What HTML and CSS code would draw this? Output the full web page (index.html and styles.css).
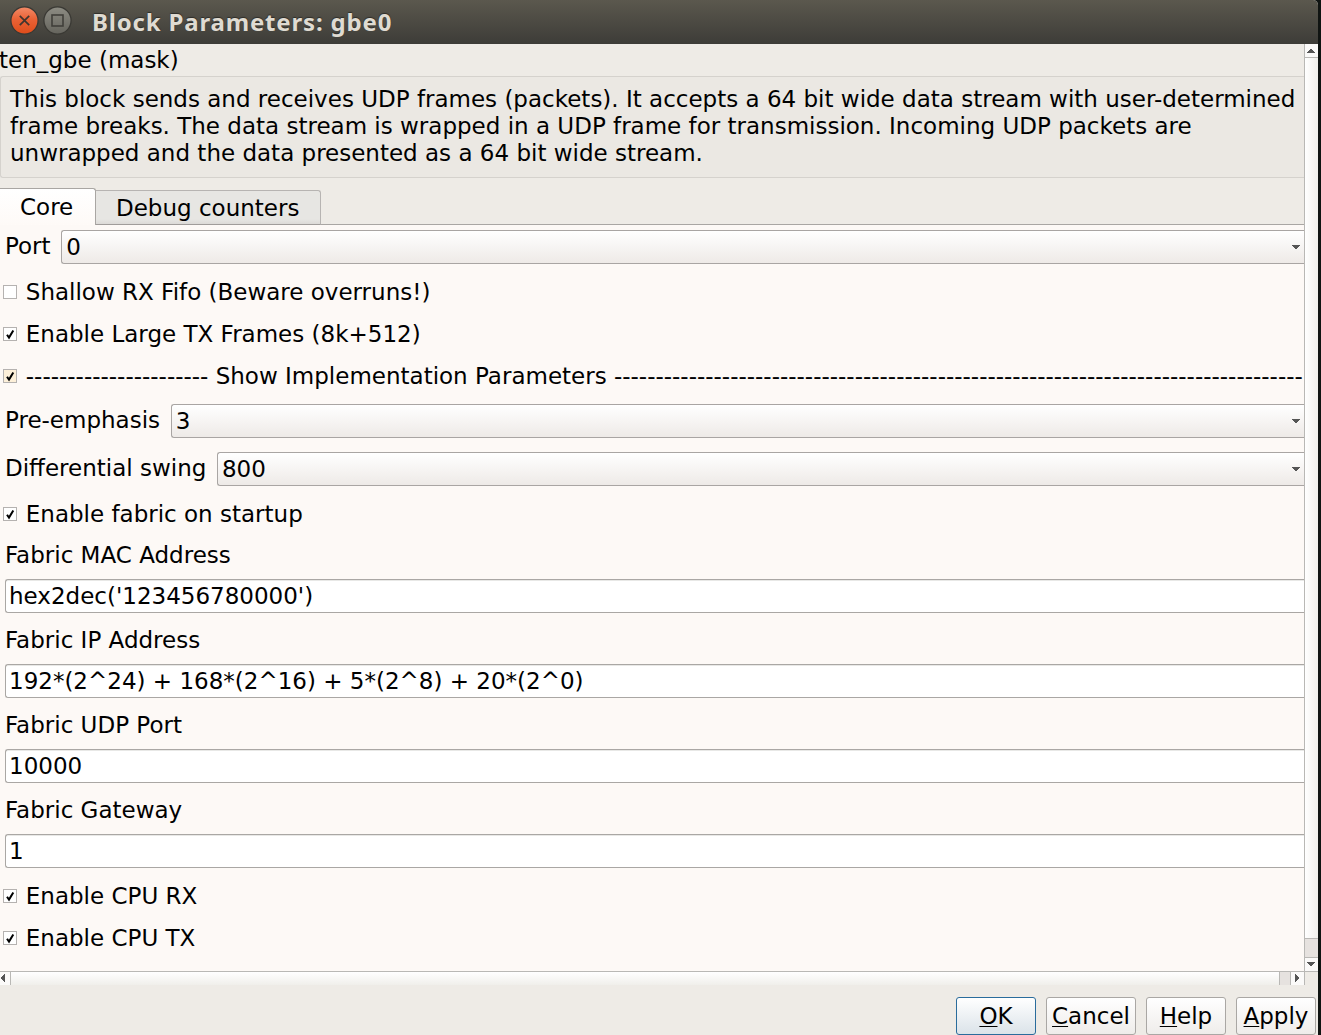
FILE: index.html
```html
<!DOCTYPE html>
<html lang="en">
<head>
<meta charset="utf-8">
<title>Block Parameters: gbe0</title>
<link rel="stylesheet" href="styles.css">
</head>
<body>
<div class="window">
  <header class="titlebar">
    <svg class="controls" width="66" height="44" viewBox="0 0 66 44">
      <defs>
        <linearGradient id="close" x1="0" y1="0" x2="0" y2="1"><stop offset="0" stop-color="#f38b68"/><stop offset=".45" stop-color="#ea6236"/><stop offset="1" stop-color="#df4c1a"/></linearGradient>
        <linearGradient id="max" x1="0" y1="0" x2="0" y2="1"><stop offset="0" stop-color="#8d8c83"/><stop offset="1" stop-color="#65645d"/></linearGradient>
      </defs>
      <circle cx="16.5" cy="20.5" r="13.6" fill="url(#close)" stroke="#3a3934" stroke-width="1.3"/>
      <path d="M11.8 15.8l9.4 9.4M21.2 15.8l-9.4 9.4" stroke="#40352e" stroke-width="1.7"/>
      <circle cx="49.5" cy="20.5" r="13.6" fill="url(#max)" stroke="#3a3934" stroke-width="1.3"/>
      <rect x="44" y="15" width="11" height="11" fill="none" stroke="#403f3a" stroke-width="1.6"/>
    </svg>
    <h1 class="title">Block Parameters: gbe0</h1>
  </header>

  <div class="scroll-area">
    <main class="content">
      <div class="mask-name">ten_gbe (mask)</div>
      <div class="description">This block sends and receives UDP frames (packets). It accepts a 64 bit wide data stream with user-determined<br>frame breaks. The data stream is wrapped in a UDP frame for transmission. Incoming UDP packets are<br>unwrapped and the data presented as a 64 bit wide stream.</div>
      <nav class="tabs">
        <div class="tab tab-active">Core</div>
        <div class="tab tab-idle">Debug counters</div>
        <div class="tab-rest"></div>
      </nav>
      <section class="panel">
        <div class="combo-row port-row"><span class="combo-label">Port</span><div class="combo"><span>0</span><svg class="arrow" width="8" height="4"><path d="M0 0h8v1H7v1H6v1H5v1H3V3H2V2H1V1H0z"/></svg></div></div>
        <div class="check-row"><span class="box"></span><span>Shallow RX Fifo (Beware overruns!)</span></div>
        <div class="check-row"><span class="box"><svg width="12" height="12"><path class="tick" d="M3 6.7L5 9.6L9.3 2.4"/></svg></span><span>Enable Large TX Frames (8k+512)</span></div>
        <div class="check-row"><span class="box box-hot"><svg width="12" height="12"><path class="tick" d="M3 6.7L5 9.6L9.3 2.4"/></svg></span><span>---------------------- Show Implementation Parameters -----------------------------------------------------------------------------------</span></div>
        <div class="combo-row"><span class="combo-label">Pre-emphasis</span><div class="combo"><span>3</span><svg class="arrow" width="8" height="4"><path d="M0 0h8v1H7v1H6v1H5v1H3V3H2V2H1V1H0z"/></svg></div></div>
        <div class="combo-row"><span class="combo-label">Differential swing</span><div class="combo"><span>800</span><svg class="arrow" width="8" height="4"><path d="M0 0h8v1H7v1H6v1H5v1H3V3H2V2H1V1H0z"/></svg></div></div>
        <div class="check-row"><span class="box"><svg width="12" height="12"><path class="tick" d="M3 6.7L5 9.6L9.3 2.4"/></svg></span><span>Enable fabric on startup</span></div>
        <div class="field"><div class="field-label">Fabric MAC Address</div><div class="input">hex2dec('123456780000')</div></div>
        <div class="field"><div class="field-label">Fabric IP Address</div><div class="input">192*(2^24) + 168*(2^16) + 5*(2^8) + 20*(2^0)</div></div>
        <div class="field"><div class="field-label">Fabric UDP Port</div><div class="input">10000</div></div>
        <div class="field"><div class="field-label">Fabric Gateway</div><div class="input">1</div></div>
        <div class="check-row"><span class="box"><svg width="12" height="12"><path class="tick" d="M3 6.7L5 9.6L9.3 2.4"/></svg></span><span>Enable CPU RX</span></div>
        <div class="check-row"><span class="box"><svg width="12" height="12"><path class="tick" d="M3 6.7L5 9.6L9.3 2.4"/></svg></span><span>Enable CPU TX</span></div>
      </section>
    </main>
    <div class="vbar">
      <div class="step step-up"><svg class="arrow" width="8" height="4"><path d="M0 4h8V3H7V2H6V1H5V0H3v1H2v1H1v1H0z"/></svg></div>
      <div class="thumb"></div>
      <div class="groove"></div>
      <div class="step step-down"><svg class="arrow" width="8" height="4"><path d="M0 0h8v1H7v1H6v1H5v1H3V3H2V2H1V1H0z"/></svg></div>
    </div>
  </div>

  <div class="hbar">
    <div class="step step-left"><svg class="arrow" width="4" height="8"><path d="M4 0v8H3V7H2V6H1V5H0V3h1V2h1V1h1V0z"/></svg></div>
    <div class="thumb"></div>
    <div class="groove"></div>
    <div class="step step-right"><svg class="arrow" width="4" height="8"><path d="M0 0v8h1V7h1V6h1V5h1V3H3V2H2V1H1V0z"/></svg></div>
  </div>

  <footer class="actions">
    <div class="button button-default"><u>O</u>K</div>
    <div class="button button-wide"><u>C</u>ancel</div>
    <div class="button"><u>H</u>elp</div>
    <div class="button"><u>A</u>pply</div>
  </footer>
</div>
</body>
</html>
```
FILE: styles.css
```css
* { box-sizing: border-box; }
body {
  margin: 0;
  background: #101412;
  color: #000;
  font: 23px/27px "DejaVu Sans", sans-serif;
  overflow: hidden;
}
.window {
  display: flex;
  flex-direction: column;
  width: 1318px;
  height: 1035px;
  background: #eeebe6;
  border-top-right-radius: 5px;
  overflow: hidden;
  white-space: nowrap;
}
.titlebar {
  display: flex;
  flex: 0 0 44px;
  height: 44px;
  padding-left: 8px;
  background: linear-gradient(#5b584e, #3d3c38);
}
.controls { flex: none; }
.title {
  margin: 0 0 0 18px;
  font: bold 24px/43px "Noto Sans", sans-serif;
  letter-spacing: 0.82px;
  color: #dfdbd2;
  text-shadow: 0 -1px 1px #2e2d29;
}
.scroll-area { display: flex; flex: 0 0 927px; }
.content { width: 1304px; overflow: hidden; }
.mask-name { height: 32px; padding-top: 3px; margin-left: -1px; }
.description {
  height: 102px;
  padding: 9px 0 0 9px;
  border: 1px solid #d5d2cd;
  border-right: 0;
  border-radius: 3px 0 0 3px;
  background: #ebe8e3;
}
.tabs { display: flex; height: 47px; padding-top: 10px; }
.tab { border: 1px solid #a9a6a3; }
.tab-active {
  width: 96px;
  height: 37px;
  padding: 5px 0 0 20px;
  border-width: 1px 1px 0 0;
  border-radius: 0 3px 0 0;
  background: linear-gradient(#fff, #fefaf7);
}
.tab-idle {
  width: 225px;
  height: 35px;
  margin-top: 2px;
  padding: 4px 0 0 20px;
  border-color: #b7b4b2;
  border-left: 0;
  border-bottom-color: #a09c9a;
  border-radius: 0 3px 0 0;
  background: linear-gradient(#e7e6e3 85%, #dcdad7);
}
.tab-rest { flex: 1; height: 37px; border-bottom: 1px solid #a9a6a3; }
.panel { height: 746px; background: #fdf9f6; }
.combo-row { display: flex; height: 48px; padding: 7px 0 0 5px; }
.port-row { height: 46px; padding-top: 5px; }
.combo-label { margin-right: 10.6px; padding-top: 3px; }
.combo {
  display: flex;
  flex: 1;
  justify-content: space-between;
  height: 34px;
  padding: 3px 4px 0;
  border: 1px solid #a9a5a3;
  border-right: 0;
  border-radius: 3px 0 0 3px;
  background: linear-gradient(#fff, #eeeae7);
}
.arrow { display: block; flex: none; fill: #555; }
.combo .arrow { margin-top: 11px; }
.check-row { display: flex; align-items: center; height: 42px; padding-left: 3px; }
.box {
  flex: none;
  width: 14px;
  height: 14px;
  margin-right: 8.8px;
  border: 1px solid #b5b2b0;
  background: #fff;
}
.box svg { display: block; }
.box-hot { background: #fdf0d9; }
.tick { fill: none; stroke: #000; stroke-width: 2; }
.field { height: 85px; padding-left: 5px; }
.field-label { height: 44px; padding-top: 7px; }
.input {
  height: 34px;
  padding: 3px 0 0 3px;
  border: 1px solid #aaa7a4;
  border-right: 0;
  border-radius: 3px 0 0 3px;
  background: #fff;
  box-shadow: inset 0 1px #e8e8e6;
}
.vbar {
  display: flex;
  flex-direction: column;
  width: 14px;
  border-left: 1px solid #b9b8b5;
}
.thumb { flex: 1; }
.step { display: flex; flex: none; align-items: center; justify-content: center; background: #fbfaf9; }
.groove { flex: none; background: #e6e2df; }
.vbar .thumb { background: linear-gradient(90deg, #fff, #f0efeb); }
.vbar .groove { height: 19px; border-top: 1px solid #b9b8b5; }
.vbar .step { padding-right: 1px; }
.step-up { height: 14px; border-bottom: 1px solid #b9b8b5; }
.step-down { height: 14px; padding-bottom: 1px; border-top: 1px solid #b9b8b5; }
.hbar { display: flex; flex: 0 0 14px; }
.hbar > div { border-top: 1px solid #b9b8b5; }
.hbar::after { content: ""; width: 13px; border-top: 1px solid #b9b8b5; }
.hbar .thumb { background: linear-gradient(#fff, #f0efeb); }
.hbar .groove { width: 11px; border-left: 1px solid #b9b8b5; }
.hbar .step { padding-bottom: 1px; }
.hbar .step-left { width: 11px; padding-right: 5px; border-right: 1px solid #b9b8b5; }
.hbar .step-right { width: 15px; padding-right: 1px; border-left: 1px solid #b9b8b5; border-right: 1px solid #b9b8b5; }
.actions { display: flex; justify-content: flex-end; gap: 10px; padding: 12px 2px 0 0; }
.button {
  width: 80px;
  height: 38px;
  padding-top: 5px;
  border: 1px solid #aaa7a4;
  border-radius: 3px;
  background: linear-gradient(#fff, #efedea);
  text-align: center;
}
.button u { text-decoration-thickness: 1px; text-underline-offset: 2px; }
.button-wide { width: 90px; }
.button-default { border-color: #2a6c9c; background: linear-gradient(#fff, #dbe3e9); }
```
